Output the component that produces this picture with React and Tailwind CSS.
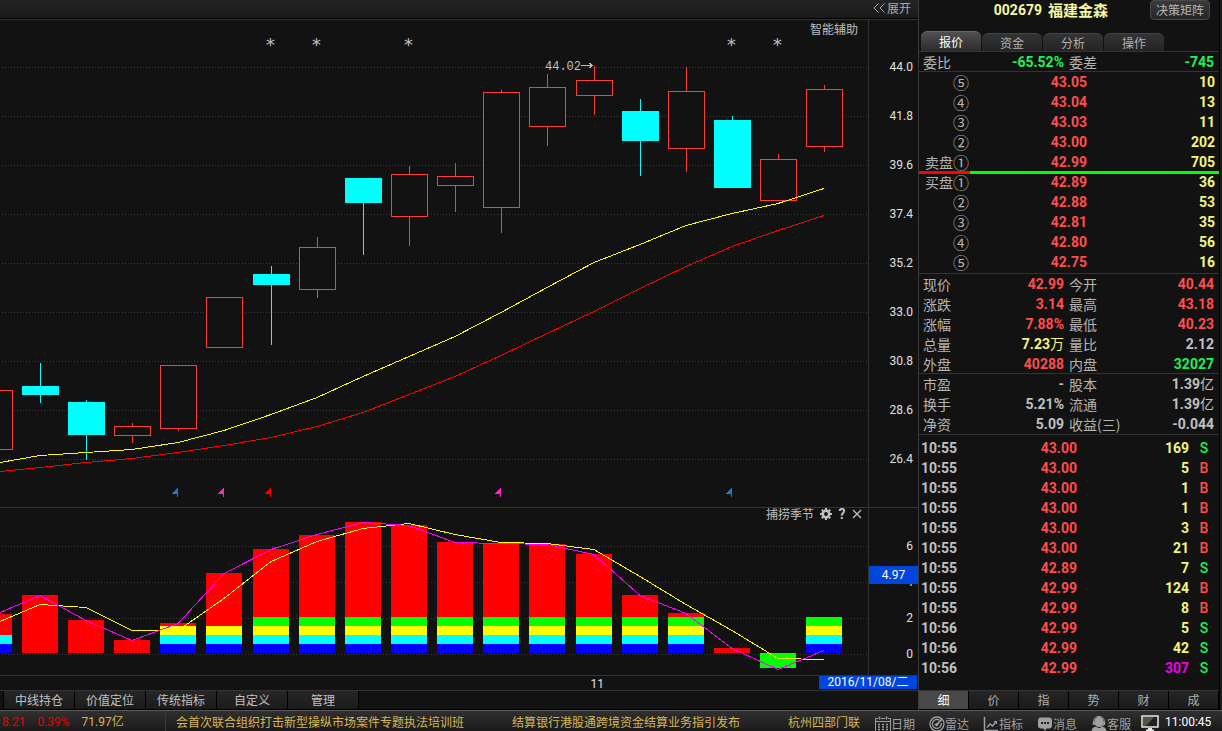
import React from "react";

const RED = "#ff3b3b";
const CYAN = "#00ffff";

// x, open/close top, open/close bottom, high, low, rising
const CANDLES = [
  [-24, 390, 450, 390, 450, true],
  [22, 386, 395, 363, 403, false],
  [68, 402, 435, 400, 460, false],
  [114, 426, 436, 423, 443, true],
  [160, 365, 429, 365, 431, true],
  [206, 297, 348, 297, 348, true],
  [253, 274, 285, 266, 345, false],
  [299, 247, 290, 237, 298, true],
  [345, 178, 203, 178, 255, false],
  [391, 174, 217, 166, 246, true],
  [437, 176, 186, 163, 212, true],
  [483, 92, 208, 90, 233, true],
  [529, 87, 127, 74, 146, true],
  [576, 80, 96, 66, 115, true],
  [622, 111, 141, 99, 176, false],
  [668, 91, 149, 67, 172, true],
  [714, 120, 188, 116, 188, false],
  [760, 159, 201, 154, 201, true],
  [806, 89, 147, 85, 152, true],
];

const MA_SHORT =
  "0,462 40,455 86,452 132,449 178,442 224,430 271,414 317,397 363,376 409,356 455,336 501,312 547,287 594,262 640,244 686,225 732,213 778,203 824,188";
const MA_LONG =
  "0,471 40,467 86,462 132,458 178,452 224,445 271,437 317,426 363,412 409,394 455,376 501,355 547,333 594,311 640,288 686,266 732,246 778,230 824,215";

// x, top of the red part, number of stacked bands from the base line
const BARS = [
  [-24, 614, 2],
  [22, 595, 0],
  [68, 620, 0],
  [114, 640, 0],
  [160, 623, 3],
  [206, 573, 3],
  [253, 549, 4],
  [299, 535, 4],
  [345, 522, 4],
  [391, 525, 4],
  [437, 542, 4],
  [483, 543, 4],
  [529, 544, 4],
  [576, 554, 4],
  [622, 595, 4],
  [668, 613, 4],
  [714, 648, 0],
  [806, 617, 4],
];
const BANDS = ["#0000ff", "#00ffff", "#ffff00", "#00ff00"];

const FAST =
  "0,612 40,595 86,620 132,640 178,623 224,573 271,549 317,534 363,522 409,525 455,542 501,543 547,544 594,554 640,595 686,613 732,648 778,669 824,650";
const SLOW =
  "0,621 40,604 86,607 132,630 178,630 224,598 271,561 317,541 363,528 409,523 455,534 501,542 547,543 594,549 640,576 686,604 732,630 778,658 824,659";

const FLAGS = [
  [178, "#0a78ff"],
  [224, "#ff22cc"],
  [271, "#ff0000"],
  [501, "#ff22cc"],
  [732, "#0a78ff"],
];
const STARS = [270, 316, 408, 731, 777];

const PRICE_AXIS = ["44.0", "41.8", "39.6", "37.4", "35.2", "33.0", "30.8", "28.6", "26.4"];

const NUM = "font-['Roboto','Noto_Sans_CJK_SC',sans-serif]";

function GridLine({ y }) {
  return <line x1="2" x2="868" y1={y + 0.5} y2={y + 0.5} stroke="#3a3a3a" strokeDasharray="1 2" />;
}

function PriceChart() {
  return (
    <svg viewBox="0 20 868 487" preserveAspectRatio="none" className="block h-full w-full" shapeRendering="crispEdges" role="img" aria-label="K线">
      {PRICE_AXIS.map((p, i) => (
        <GridLine key={p} y={67 + i * 49} />
      ))}
      {CANDLES.map(([x, top, bottom, high, low, up]) => (
        <g key={x}>
          {up ? (
            <>
              <rect x={x + 0.5} y={top + 0.5} width="36" height={bottom - top - 1} fill="#121212" stroke={RED} />
              {high < top && <rect x={x + 18} y={high} width="1" height={top - high} fill={RED} />}
              {low > bottom && <rect x={x + 18} y={bottom} width="1" height={low - bottom} fill={RED} />}
            </>
          ) : (
            <>
              <rect x={x} y={top} width="37" height={bottom - top} fill={CYAN} />
              <rect x={x + 18} y={high} width="1" height={low - high} fill={CYAN} />
            </>
          )}
        </g>
      ))}
      <polyline points={MA_LONG} fill="none" stroke="#ff0000" transform="translate(0 0.5)" />
      <polyline points={MA_SHORT} fill="none" stroke="#ffff00" transform="translate(0 0.5)" />
      {FLAGS.map(([x, c]) => (
        <path key={x} d={`M${x} 488 h-1 l-5 5 v1 h5 v3 h1 z`} fill={c} />
      ))}
      {STARS.map((x) => (
        <text key={x} x={x + 0.5} y="51" textAnchor="middle" fill="#c0c0c0" className="font-['DejaVu_Sans_Mono',monospace] text-lg">
          *
        </text>
      ))}
      <text x="545" y="70" fill="#c0c0c0" className="font-['Liberation_Mono',monospace] text-xs">
        44.02
      </text>
      <path d="M581 65.500h12M589 63.500h2M589 67.500h2M590 64.500h2M590 66.500h2" stroke="#c0c0c0" fill="none" />
    </svg>
  );
}

function IndicatorChart() {
  return (
    <svg viewBox="0 508 868 167" preserveAspectRatio="none" className="block h-full w-full" shapeRendering="crispEdges" role="img" aria-label="捕捞季节">
      {[546, 582, 618, 654].map((y) => (
        <GridLine key={y} y={y} />
      ))}
      {BARS.map(([x, top, n]) => (
        <g key={x}>
          <rect x={x} y={top} width="36" height={653 - top} fill="#ff0000" />
          {BANDS.slice(0, n).map((c, i) => (
            <rect key={c} x={x} y={644 - i * 9} width="36" height="9" fill={c} />
          ))}
        </g>
      ))}
      <rect x="760" y="653" width="36" height="15" fill="#00ff00" />
      <polyline points={SLOW} fill="none" stroke="#ffff00" transform="translate(0 0.5)" />
      <polyline points={FAST} fill="none" stroke="#ff00ff" transform="translate(0 0.5)" />
    </svg>
  );
}

function GearIcon() {
  return (
    <svg viewBox="0 0 12 12" className="size-3" fill="none" stroke="currentColor">
      <circle cx="6" cy="6" r="3.200" strokeWidth="2.600" />
      <path d="M6 0v2M6 10v2M0 6h2M10 6h2M1.800 1.800l1.400 1.400M8.800 8.800l1.400 1.400M10.200 1.800L8.800 3.200M3.200 8.800l-1.400 1.400" strokeWidth="2.200" />
    </svg>
  );
}

function CalendarIcon() {
  return (
    <svg viewBox="0 0 16 16" className="size-4" fill="none" stroke="currentColor">
      <path d="M3 2.500H.5v13h15v-13H13M6 2.500h4M.5 5.500h15" />
      <path d="M4.500 .5v3M11.500 .5v3" strokeWidth="1.500" />
      <path d="M3 8.500h2M7 8.500h2M11 8.500h2M3 11h2M7 11h2M11 11h2M3 13.500h2M7 13.500h2M11 13.500h2" strokeWidth="1.500" />
    </svg>
  );
}

function RadarIcon() {
  return (
    <svg viewBox="0 0 16 16" className="size-4" fill="none" stroke="currentColor">
      <circle cx="8" cy="8" r="7" strokeWidth="1.300" />
      <path d="M10.500 4.200A4.500 4.500 0 1 0 12.300 7" strokeWidth="1.300" />
      <path d="M8 8.500l5-5.500" strokeWidth="1.600" />
      <circle cx="7.600" cy="8.600" r="1.700" fill="currentColor" stroke="none" />
    </svg>
  );
}

function TrendIcon() {
  return (
    <svg viewBox="0 0 16 16" className="size-4" fill="none" stroke="currentColor">
      <path d="M1.500 1v13.500H15" strokeWidth="1.500" />
      <path d="M4 11.500l3-3.500 2.500 2L13 5.800" strokeWidth="1.400" />
      <path d="M10.500 5h3.500v3.500z" fill="currentColor" stroke="none" />
    </svg>
  );
}

function MessageIcon() {
  return (
    <svg viewBox="0 0 16 16" className="size-4" fill="currentColor">
      <path d="M4 1.500h8a3 3 0 0 1 3 3v5a3 3 0 0 1-3 3H9.500L8 15l-1.500-2.500H4a3 3 0 0 1-3-3v-5a3 3 0 0 1 3-3z" />
      <path d="M4 6h2v2H4zM7 6h2v2H7zM10 6h2v2h-2z" fill="#222" />
    </svg>
  );
}

function ServiceIcon() {
  return (
    <svg viewBox="0 0 16 16" className="size-4" fill="currentColor">
      <path d="M8 1a4.500 4.500 0 0 1 4.500 4.500v1a4.500 4.500 0 0 1-9 0v-1A4.500 4.500 0 0 1 8 1z" />
      <path d="M2.600 7.500V5.800a5.400 5.400 0 0 1 10.800 0v1.700M13.400 7.500q0 2.500-3.500 3" fill="none" stroke="currentColor" />
      <path d="M1.800 5.500h2V9h-2zM12.200 5.500h2V9h-2z" />
      <path d="M.5 16q0-5 4.500-5.300l3 1.500 3-1.500Q15.500 11 15.500 16z" />
    </svg>
  );
}

function MonitorIcon() {
  return (
    <svg viewBox="0 0 18 16" className="h-4 w-[18px] shrink-0" role="img" aria-label="显示器">
      <path d="M1 1h16v11H1z" fill="#22221c" stroke="#e8e8e8" strokeWidth="1.500" />
      <path d="M2 2h11L5 11H2z" fill="#55534a" />
      <path d="M7 13h4v1.500h2V16H5v-1.500h2z" fill="#e8e8e8" />
    </svg>
  );
}

const G = "text-[#1ff05a]";
const R = "text-[#ff4d4d]";
const Y = "text-[#f5f57a]";
const W = "text-[#c0c0c0]";

function Pair({ items }) {
  return (
    <dl className="grid grid-cols-[146px_1fr] pl-1 pr-[5px]">
      {items.map(([label, value, color]) => (
        <div key={label} className="flex h-5 items-center justify-between odd:mr-[5px]">
          <dt className="text-[#b4b4b4]">{label}</dt>
          <dd className={`font-bold ${color} ${NUM}`}>
            {value.replace(/[万亿]/, "")}
            {/[万亿]/.test(value) && <span className="font-normal">{value.slice(-1)}</span>}
          </dd>
        </div>
      ))}
    </dl>
  );
}

function Book({ side, rows }) {
  return (
    <table className="w-full table-fixed text-right" aria-label={side}>
      <colgroup>
        <col className="w-[50px]" />
        <col className="w-[118px]" />
        <col />
      </colgroup>
      <tbody>
        {rows.map(([n, price, vol]) => (
          <tr key={n} className="h-5">
            <th scope="row" className="p-0 font-normal text-[#b4b4b4]">
              <span className="flex h-5 items-center justify-end whitespace-nowrap leading-5">
                {n === "①" && side}
                <span className="text-base leading-5">{n}</span>
              </span>
            </th>
            <td className={`p-0 font-bold leading-5 ${R} ${NUM}`}>{price}</td>
            <td className={`p-0 pr-1 font-bold leading-5 ${Y} ${NUM}`}>{vol}</td>
          </tr>
        ))}
      </tbody>
    </table>
  );
}

const SELL = [
  ["⑤", "43.05", "10"],
  ["④", "43.04", "13"],
  ["③", "43.03", "11"],
  ["②", "43.00", "202"],
  ["①", "42.99", "705"],
];
const BUY = [
  ["①", "42.89", "36"],
  ["②", "42.88", "53"],
  ["③", "42.81", "35"],
  ["④", "42.80", "56"],
  ["⑤", "42.75", "16"],
];
const QUOTE = [
  ["现价", "42.99", R],
  ["今开", "40.44", R],
  ["涨跌", "3.14", R],
  ["最高", "43.18", R],
  ["涨幅", "7.88%", R],
  ["最低", "40.23", R],
  ["总量", "7.23万", Y],
  ["量比", "2.12", W],
  ["外盘", "40288", R],
  ["内盘", "32027", G],
];
const BASIC = [
  ["市盈", "-", W],
  ["股本", "1.39亿", W],
  ["换手", "5.21%", W],
  ["流通", "1.39亿", W],
  ["净资", "5.09", W],
  ["收益(三)", "-0.044", W],
];
const TICKS = [
  ["10:55", "43.00", "169", "S"],
  ["10:55", "43.00", "5", "B"],
  ["10:55", "43.00", "1", "B"],
  ["10:55", "43.00", "1", "B"],
  ["10:55", "43.00", "3", "B"],
  ["10:55", "43.00", "21", "B"],
  ["10:55", "42.89", "7", "S"],
  ["10:55", "42.99", "124", "B"],
  ["10:55", "42.99", "8", "B"],
  ["10:56", "42.99", "5", "S"],
  ["10:56", "42.99", "42", "S"],
  ["10:56", "42.99", "307", "S"],
];

function QuotePanel() {
  return (
    <aside className="flex w-[304px] shrink-0 border-l border-[#3a3a3a]">
      <div className="flex min-w-0 flex-1 flex-col text-sm leading-5">
        <header className="flex h-[31px] items-start justify-end gap-[42px] pr-[9px]">
          <h1 className="flex h-5 items-center gap-1.5 font-bold text-[#f8f8a0]">
            <span className={NUM}>002679</span>
            <span className="text-[15px]">福建金森</span>
          </h1>
          <button className="h-5 w-[60px] rounded-sm border border-[#484848] bg-linear-to-b from-[#3a3a3a] to-[#262626] text-xs leading-4 text-[#b8b8b8]">
            决策矩阵
          </button>
        </header>
        <nav className="flex h-5 items-end gap-px pl-0.5 text-xs">
          <button className="h-5 w-[60px] rounded-t-md border-t border-[#6a6a6a] bg-linear-to-b from-[#505050] to-[#2c2c2c] leading-[18px] text-white">报价</button>
          {["资金", "分析", "操作"].map((t) => (
            <button key={t} className="h-[18px] w-[60px] rounded-t-md border-t border-[#444] bg-linear-to-b from-[#333] to-[#242424] leading-4 text-[#b0b0b0]">
              {t}
            </button>
          ))}
        </nav>
        <div className="border-y border-[#333]">
          <div className="-mb-px">
            <Pair
              items={[
                ["委比", "-65.52%", G],
                ["委差", "-745", G],
              ]}
            />
          </div>
        </div>
        <Book side="卖盘" rows={SELL} />
        <div className="z-10 -mb-0.5 -mt-px flex h-[3px]">
          <div className="w-[17%] bg-[#ff0000]" />
          <div className="flex-1 bg-[#00ff00]" />
        </div>
        <Book side="买盘" rows={BUY} />
        <div className="mt-px border-t border-[#333]">
          <Pair items={QUOTE} />
        </div>
        <div className="-mt-px border-y border-[#333]">
          <Pair items={BASIC} />
        </div>
        <div className="flex-1 pt-[3px]">
          <table className={`w-full table-fixed text-right font-bold ${NUM}`} aria-label="成交明细">
            <colgroup>
              <col className="w-[50px]" />
              <col className="w-[108px]" />
              <col className="w-[112px]" />
              <col />
            </colgroup>
            <tbody>
              {TICKS.map(([time, price, vol, side], i) => (
                <tr key={i} className="h-5">
                  <td className={`p-0 pl-0.5 text-left ${W}`}>{time}</td>
                  <td className={`p-0 ${R}`}>{price}</td>
                  <td className={`p-0 ${vol === "307" ? "text-[#f000f0]" : Y}`}>{vol}</td>
                  <td className={`p-0 text-center font-medium ${side === "S" ? G : R}`}>{side}</td>
                </tr>
              ))}
            </tbody>
          </table>
        </div>
        <nav className="grid h-5 grid-cols-6 border-b border-t border-b-black border-t-[#333] text-xs leading-[18px]">
          {["细", "价", "指", "势", "财", "成"].map((t, i) => (
            <button
              key={t}
              className={
                i === 0
                  ? "border-r border-black bg-[#484848] text-white"
                  : "border-r border-black bg-linear-to-b from-[#252525] to-[#1a1a1a] text-[#b0b0b0]"
              }
            >
              {t}
            </button>
          ))}
        </nav>
      </div>
      <div className="w-[3px] border-l border-black bg-[#1c1c1c]" />
    </aside>
  );
}

const SHORTCUTS = [
  ["日期", CalendarIcon],
  ["雷达", RadarIcon],
  ["指标", TrendIcon],
  ["消息", MessageIcon],
  ["客服", ServiceIcon],
];

export default function App() {
  return (
    <div className="flex min-h-screen flex-col overflow-hidden bg-[#121212] font-['Noto_Sans_CJK_SC',sans-serif] text-xs text-[#c0c0c0]">
      <div className="flex">
        <main className="flex min-w-0 flex-1 flex-col">
          <div className="flex h-[19px] items-start justify-end border-b border-black bg-linear-to-b from-[#242424] to-[#1a1a1a] pr-[7px]">
            <button className="flex h-4 items-center gap-0.5 whitespace-nowrap leading-4 text-[#a8a8a8]">
              <svg viewBox="0 0 12 10" className="h-2.5 w-3" fill="none" stroke="currentColor">
                <path d="M5.500 .5L1 5l4.500 4.500M11.500 .5L7 5l4.500 4.500" />
              </svg>
              展开
            </button>
          </div>

          <section className="grid grid-cols-[1fr_50px] border-t border-[#333]">
            <div className="relative h-[487px]">
              <PriceChart />
              <a href="#assist" className="absolute right-2.5 top-0 leading-[18px]">
                智能辅助
              </a>
            </div>
            <div className={`border-l border-[#333] pr-[5px] pt-[23px] text-right leading-[49px] text-[#e0e0e0] ${NUM}`}>
              {PRICE_AXIS.map((p) => (
                <div key={p}>{p}</div>
              ))}
            </div>
          </section>

          <section className="grid grid-cols-[1fr_50px] border-t border-[#333]">
            <div className="relative h-[167px]">
              <IndicatorChart />
              <div className="absolute right-1.5 top-0 flex h-3 items-center gap-1.5 leading-3">
                <span>捕捞季节</span>
                <button aria-label="设置">
                  <GearIcon />
                </button>
                <button className={`w-2 text-sm font-bold leading-3 ${NUM}`}>?</button>
                <button aria-label="关闭">
                  <svg viewBox="0 0 10 10" className="size-2.5" fill="none" stroke="currentColor" strokeWidth="1.300">
                    <path d="M1 1l8 8M9 1L1 9" />
                  </svg>
                </button>
              </div>
            </div>
            <div className={`relative border-l border-[#333] pr-[5px] pt-5 text-right leading-9 text-[#e0e0e0] ${NUM}`}>
              {["6", "4", "2", "0"].map((v) => (
                <div key={v}>{v}</div>
              ))}
              <div className="absolute inset-x-0 top-[58px] h-[18px] bg-[#0046dc] text-center leading-[18px] text-white">4.97</div>
            </div>
          </section>

          <div className="flex h-4 items-start border-y border-[#333]">
            <div className={`flex-1 pr-[215px] text-right leading-4 text-[#e0e0e0] ${NUM}`}>11</div>
            <div className={`mr-px h-[13px] w-[98px] bg-[#0046dc] text-center leading-[13px] text-white ${NUM}`}>2016/11/08/二</div>
          </div>

          <nav className="flex h-[19px] border-b border-black pl-[3px] leading-[18px]">
            {["中线持仓", "价值定位", "传统指标", "自定义", "管理"].map((t) => (
              <button key={t} className="w-[71px] border-l border-black bg-linear-to-b from-[#262626] to-[#1b1b1b]">
                {t}
              </button>
            ))}
            <div className="border-l border-black" />
          </nav>
        </main>
        <QuotePanel />
      </div>

      <footer className="flex h-[21px] overflow-hidden border-t border-[#5a5a5a] bg-linear-to-b from-[#303030] to-[#1a1a1a] leading-5">
        <div className={`flex w-[166px] shrink-0 gap-3 border-r border-[#3a3a3a] pl-0.5 pt-px ${NUM}`}>
          <span className="text-[#e60000]">8.21</span>
          <span className="text-[#e60000]">0.39%</span>
          <span className="text-[#d8b656]">71.97亿</span>
        </div>
        <div className="mx-2.5 flex min-w-0 flex-1 gap-12 overflow-hidden whitespace-nowrap pt-px text-[#d8b656]">
          <span>会首次联合组织打击新型操纵市场案件专题执法培训班</span>
          <span>结算银行港股通跨境资金结算业务指引发布</span>
          <span>杭州四部门联</span>
        </div>
        <div className="flex shrink-0 gap-3.5 pt-[5px] text-[#a0a0a0]">
          {SHORTCUTS.map(([label, Icon]) => (
            <button key={label} className="flex h-4 items-center whitespace-nowrap leading-4">
              <Icon />
              {label}
            </button>
          ))}
        </div>
        <div className="flex w-[91px] shrink-0 items-start gap-1.5 pl-2.5 pt-1 text-white">
          <MonitorIcon />
          <time className={`leading-[14px] ${NUM}`}>11:00:45</time>
        </div>
      </footer>
    </div>
  );
}
